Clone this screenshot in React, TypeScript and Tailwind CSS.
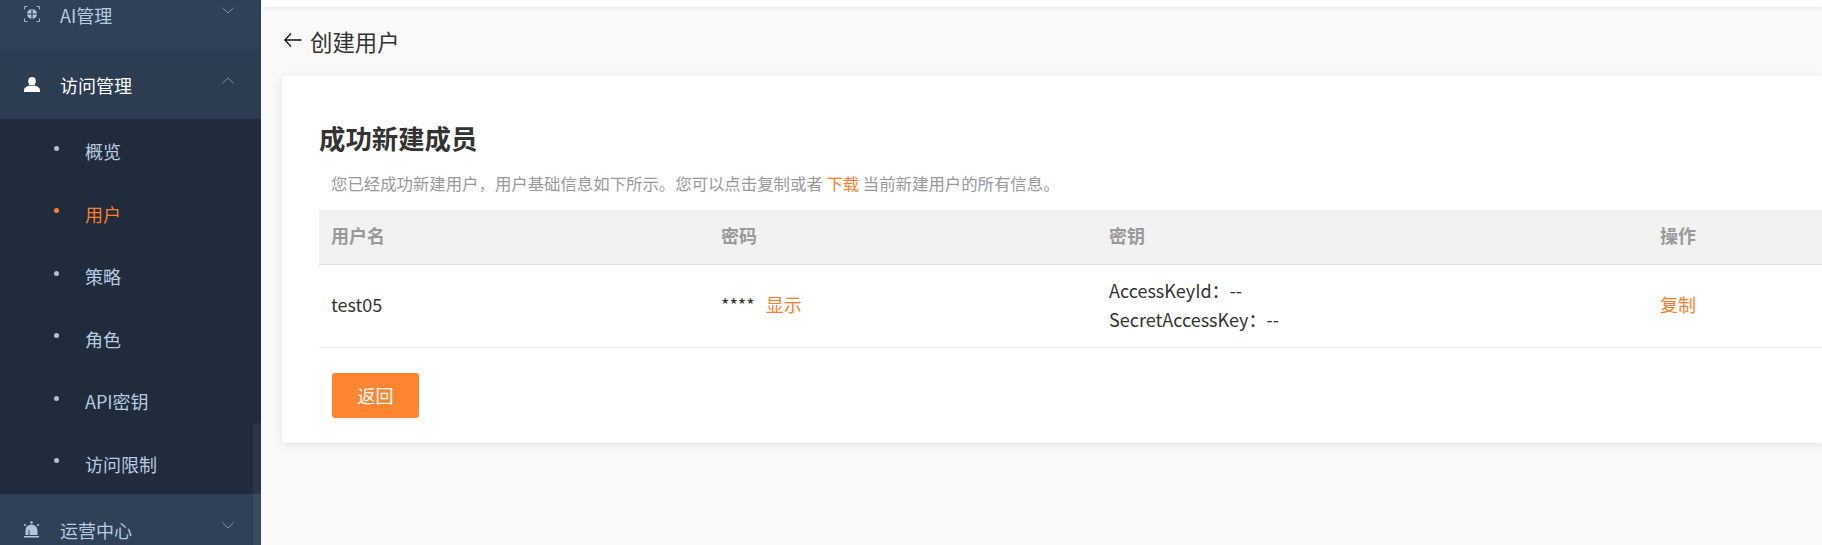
import React from 'react';

const FONT = '"Noto Sans CJK SC", "Liberation Sans", sans-serif';

const subMenu = [
  { label: '概览' },
  { label: '用户', active: true },
  { label: '策略' },
  { label: '角色' },
  { label: 'API密钥' },
  { label: '访问限制' },
];

const Chevron: React.FC<{ up?: boolean }> = ({ up }) => (
  <svg width="12" height="7" viewBox="0 0 12 7" fill="none" className={up ? 'rotate-180' : ''}>
    <path d="M.5.8 6 6 11.500.8" stroke="#8290a1" strokeWidth="1" />
  </svg>
);

const AiIcon = () => (
  <svg width="16" height="16" viewBox="0 0 16 16" fill="none">
    <path d="M3.500.5H.5v3M12.500.5h3v3M3.500 15.500H.5v-3M12.500 15.500h3v-3" stroke="#a9b6c5" strokeWidth="1" />
    <circle cx="8" cy="8" r="5" fill="#b4c0cd" />
    <path d="M3 8h10M8 3v10" stroke="#2f4057" strokeWidth="1.200" />
  </svg>
);

const UserIcon = () => (
  <svg width="16" height="15" viewBox="0 0 16 15" fill="#ffffff">
    <ellipse cx="8" cy="4.200" rx="3.800" ry="4.200" />
    <path d="M0 15v-2c0-2.300 3-3.800 5.500-4.500 1.500.8 3.500.8 5 0 2.500.7 5.500 2.200 5.500 4.500v2z" />
  </svg>
);

const BellIcon = () => (
  <svg width="15" height="17" viewBox="0 0 15 17" fill="#b4c4d6">
    <circle cx="7.500" cy="1.500" r="1.300" />
    <circle cx="1" cy="4" r="1" />
    <circle cx="14" cy="4" r="1" />
    <path d="M1.500 14V9.500a6 6 0 0 1 12 0V14z" />
    <rect x="4.500" y="9" width="1" height="5" fill="#2f4057" />
    <rect x="0" y="15" width="15" height="1.500" />
  </svg>
);

const MenuGroup: React.FC<{
  icon: React.ReactNode;
  label: string;
  open?: boolean;
  up?: boolean;
}> = ({ icon, label, open, up }) => (
  <div className={`h-[70px] flex items-center pl-[24px] pr-[27px] text-[18px] ${open ? 'bg-[#2c3d51] text-white' : 'bg-[#2f4057] text-[#b7cbe0]'}`}>
    <span className="w-[36px] flex items-center">{icon}</span>
    <span className="flex-1 pt-[2px]">{label}</span>
    <span className="-mt-[8px]"><Chevron up={up} /></span>
  </div>
);

const Sidebar = () => (
  <aside className="relative w-[261px] h-full shrink-0 overflow-hidden bg-[#202c3c]">
    <div className="-mt-[21px]">
      <MenuGroup icon={<AiIcon />} label="AI管理" />
      <MenuGroup icon={<UserIcon />} label="访问管理" open up />
      <ul>
        {subMenu.map(item => (
          <li
            key={item.label}
            className={`h-[62.5px] flex items-center pl-[54px] text-[18px] ${item.active ? 'text-[#ff7d2e]' : 'text-[#b7cbe0]'}`}
          >
            <span className={`w-[5px] h-[5px] rounded-full mr-[26px] -mt-[4px] ${item.active ? 'bg-[#ff7d2e]' : 'bg-[#b4c0cd]'}`} />
            <span className="pt-[3px]">{item.label}</span>
          </li>
        ))}
      </ul>
      <MenuGroup icon={<BellIcon />} label="运营中心" />
    </div>
    <div className="absolute right-0 top-[423px] bottom-0 w-[8px] rounded-t-[4px] bg-white/5" />
  </aside>
);

const App: React.FC = () => {
  return (
    <div className="w-[1822px] h-[545px] flex overflow-hidden bg-[#f9f9f9] text-[#333333]" style={{ fontFamily: FONT }}>
      <Sidebar />
      <main className="flex-1 min-w-0 relative">
        <div className="h-[7px] bg-white shadow-[0_1px_4px_rgba(0,0,0,0.08)]" />
        <div className="h-[69px] flex items-center pl-[23px] text-[22.4px] text-[#333333]">
          <svg width="18" height="14" viewBox="0 0 18 14" fill="none" className="mr-[8px] -mt-[4px]">
            <path d="M7 .5.8 7 7 13.500M1 7h16.500" stroke="#111111" strokeWidth="1.300" />
          </svg>
          <span>创建用户</span>
        </div>
        <section className="ml-[21px] h-[367px] rounded-l-[4px] bg-white shadow-[0_2px_10px_rgba(0,0,0,0.1)] pt-[42px] pl-[37px]">
          <h1 className="h-[40px] text-[26.4px] leading-[40px] font-bold text-[#333333]">成功新建成员</h1>
          <p className="h-[52px] pl-[12px] pt-[13px] text-[16.4px] leading-[24px] text-[#999999]">
            您已经成功新建用户，用户基础信息如下所示。您可以点击复制或者 <span className="text-[#ff7d2e]">下载</span> 当前新建用户的所有信息。
          </p>
          <table className="w-full table-fixed border-collapse text-[18px]">
            <thead>
              <tr className="h-[54px] bg-[#f2f2f2] border-b border-[#dddddd] text-left text-[#999999]">
                <th className="w-[390px] pl-[12px] pb-[2px] font-bold">用户名</th>
                <th className="w-[388px] pl-[12px] pb-[2px] font-bold">密码</th>
                <th className="w-[551px] pl-[12px] pb-[2px] font-bold">密钥</th>
                <th className="pl-[12px] pb-[2px] font-bold">操作</th>
              </tr>
            </thead>
            <tbody>
              <tr className="h-[83px] border-b border-[#eeeeee]">
                <td className="pl-[12px] pb-[3px]">test05</td>
                <td className="pl-[12px] pb-[2px]">
                  **** <span className="ml-[7px] text-[#ff7d2e]">显示</span>
                </td>
                <td className="pl-[12px] pb-[2px] leading-[29px]">
                  <div>AccessKeyId：--</div>
                  <div>SecretAccessKey：--</div>
                </td>
                <td className="pl-[12px] pb-[2px] text-[#ff7d2e]">复制</td>
              </tr>
            </tbody>
          </table>
          <button className="mt-[25px] ml-[13px] w-[87px] h-[45px] rounded-[3px] bg-[#ff8533] text-white text-[18px]">返回</button>
        </section>
      </main>
    </div>
  );
};

export default App;
